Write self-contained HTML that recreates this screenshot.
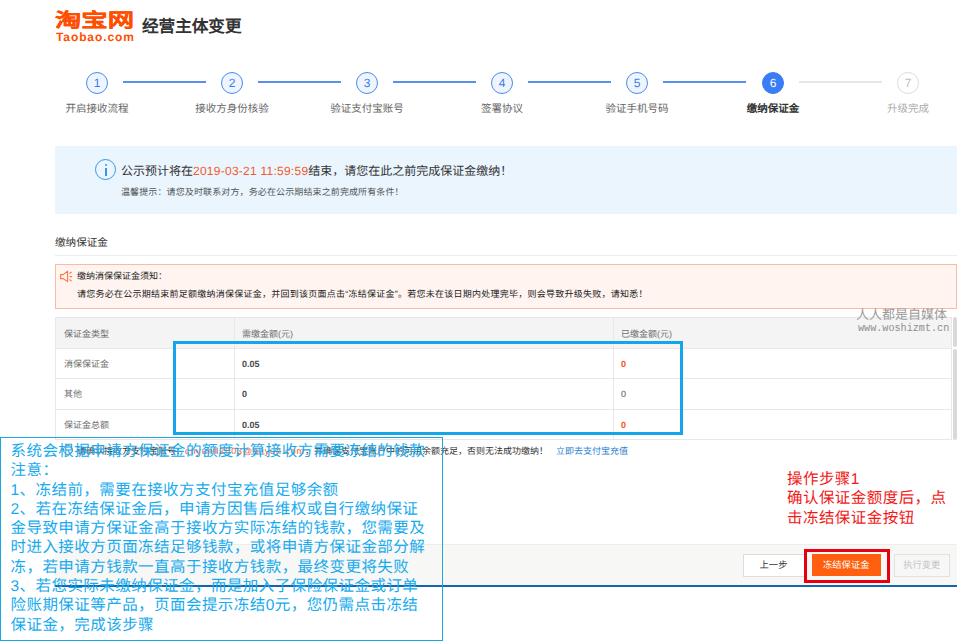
<!DOCTYPE html>
<html lang="zh-CN"><head><meta charset="utf-8">
<style>
*{margin:0;padding:0;box-sizing:border-box}
html,body{width:964px;height:643px;overflow:hidden;background:#fff;font-family:"Liberation Sans",sans-serif;color:#333;text-rendering:geometricPrecision}
.a{position:absolute;white-space:nowrap}
.logo1{left:55px;top:8px;font-size:19.5px;font-weight:900;color:#ff4e00;line-height:26px;transform-origin:0 0;transform:scaleX(1.35);-webkit-text-stroke:0.2px #ff4e00}
.logo2{left:56px;top:30px;font-size:12px;font-weight:bold;color:#ff4e00;line-height:14px;letter-spacing:0.9px}
.title{left:142px;top:15.5px;font-size:16.6px;font-weight:bold;color:#333;line-height:22px}
.circ{position:absolute;width:22px;height:22px;border:1px solid #4a8af0;border-radius:50%;background:#eef5ff;color:#3d7de8;font-size:12px;line-height:20px;text-align:center}
.circ.on{background:#3a7cf5;border-color:#3a7cf5;color:#fff}
.circ.off{background:#fff;border-color:#ddd;color:#bbb}
.line{position:absolute;height:2px;background:#5990f0;top:81px;width:83px}
.line.off{background:#e6e6e6}
.slab{position:absolute;top:101.5px;font-size:10.5px;color:#666;line-height:14px;width:120px;text-align:center}
.info{left:55px;top:146px;width:902px;height:68px;background:#eaf5fe}
.icon{left:95px;top:159px;width:21px;height:21px;border:1.7px solid #3496e8;border-radius:50%}
.icon:before{content:"";position:absolute;left:8.6px;top:4.2px;width:2px;height:2px;background:#3496e8;border-radius:1px}
.icon:after{content:"";position:absolute;left:8.8px;top:7.5px;width:1.8px;height:8px;background:#3496e8}
.t1{left:121px;top:163px;font-size:12px;color:#333;line-height:16px}
.t1 span{color:#f25a2a;letter-spacing:0.25px}
.t2{left:121px;top:186px;font-size:9px;color:#555;line-height:12px;letter-spacing:0.12px}
.h2{left:55px;top:236px;font-size:10.6px;color:#333;line-height:14px}
.hr{left:55px;top:255px;width:902px;height:1px;background:#ececec}
.notice{left:55px;top:264px;width:902px;height:45px;background:#fff4f0;border:1px solid #f9bba3}
.n1{left:77px;top:270px;font-size:9px;color:#222;line-height:12px}
.n2{left:77px;top:288px;font-size:9px;color:#222;line-height:12px;letter-spacing:0.25px}
.tbl{left:55px;top:317px;width:897px;height:123px;border:1px solid #e8e8e8}
.row{position:absolute;left:0;width:895px;height:1px;background:#e8e8e8}
.col{position:absolute;top:0;width:1px;height:121px;background:#e8e8e8}
.th{position:absolute;left:0;top:0;width:895px;height:30px;background:#f4f4f4}
.cell{position:absolute;font-size:9px;color:#6e6e6e;line-height:12px}
.num{position:absolute;font-size:9px;color:#4a4a4a;font-weight:bold;line-height:12px}
.org{color:#f5561f}
</style></head><body>
<div class="a logo1">淘宝网</div>
<div class="a logo2">Taobao.com</div>
<div class="a title">经营主体变更</div>

<div class="circ" style="left:86px;top:72px">1</div>
<div class="line" style="left:123px"></div>
<div class="circ" style="left:221px;top:72px">2</div>
<div class="line" style="left:258px"></div>
<div class="circ" style="left:356px;top:72px">3</div>
<div class="line" style="left:393px"></div>
<div class="circ" style="left:491px;top:72px">4</div>
<div class="line" style="left:528px"></div>
<div class="circ" style="left:626px;top:72px">5</div>
<div class="line" style="left:663px"></div>
<div class="circ on" style="left:762px;top:72px">6</div>
<div class="line off" style="left:799px"></div>
<div class="circ off" style="left:897px;top:72px">7</div>

<div class="slab" style="left:37px">开启接收流程</div>
<div class="slab" style="left:172px">接收方身份核验</div>
<div class="slab" style="left:307px">验证支付宝账号</div>
<div class="slab" style="left:442px">签署协议</div>
<div class="slab" style="left:577px">验证手机号码</div>
<div class="slab" style="left:713px;font-weight:bold;color:#333">缴纳保证金</div>
<div class="slab" style="left:848px;color:#aaa">升级完成</div>

<div class="a info"></div>
<div class="a icon"></div>
<div class="a t1">公示预计将在<span>2019-03-21 11:59:59</span>结束，请您在此之前完成保证金缴纳！</div>
<div class="a t2">温馨提示：请您及时联系对方，务必在公示期结束之前完成所有条件！</div>

<div class="a h2">缴纳保证金</div>
<div class="a hr"></div>

<div class="a notice"></div>
<div class="a n1">缴纳消保保证金须知：</div>
<div class="a n2">请您务必在公示期结束前足额缴纳消保保证金，并回到该页面点击“冻结保证金”。若您未在该日期内处理完毕，则会导致升级失败，请知悉！</div>

<div class="a tbl">
 <div class="th"></div>
 <div class="row" style="top:30px"></div>
 <div class="row" style="top:60px"></div>
 <div class="row" style="top:91px"></div>
 <div class="col" style="left:178px"></div>
 <div class="col" style="left:557px"></div>
 <div class="cell" style="left:8px;top:10px">保证金类型</div>
 <div class="cell" style="left:186px;top:10px">需缴金额(元)</div>
 <div class="cell" style="left:565px;top:10px">已缴金额(元)</div>
 <div class="cell" style="left:8px;top:40px">消保保证金</div>
 <div class="cell" style="left:8px;top:70px">其他</div>
 <div class="cell" style="left:8px;top:101px">保证金总额</div>
 <div class="num" style="left:186px;top:40px">0.05</div>
 <div class="num" style="left:186px;top:70px">0</div>
 <div class="num" style="left:186px;top:101px">0.05</div>
 <div class="num org" style="left:565px;top:40px">0</div>
 <div class="num" style="left:565px;top:70px;font-weight:normal;color:#555">0</div>
 <div class="num org" style="left:565px;top:101px">0</div>
</div>


<div class="a" style="left:63px;top:445px;width:10px;height:10px;border:1px solid #888;border-radius:50%"></div>
<div class="a note" style="left:77px;top:445px;font-size:9px;line-height:12px;color:#333">请确认接收方支付宝账号：<span class="org" style="letter-spacing:0.9px">cnyunll2003@aliyun.com</span>，并确保支付宝账户中的可用余额充足，否则无法成功缴纳！<span style="color:#2a7fd4;margin-left:8px">立即去支付宝充值</span></div>

<div class="a foot" style="left:55px;top:544px;width:902px;height:43px;background:#f6f6f6;border-bottom:2px solid #1265ae;border-top:1px solid #ededed;background:#f7f7f5"></div>
<div class="a btn" style="left:743px;top:554px;width:64px;height:23px;background:#fff;border:1px solid #ddd;font-size:9.3px;color:#333;line-height:21px;text-align:center;text-indent:-3px">上一步</div>
<div class="a btn" style="left:811.5px;top:554px;width:69.5px;height:22px;background:#ff5f0e;font-size:9.3px;color:#fff;line-height:22px;text-align:center">冻结保证金</div>
<div class="a btn" style="left:893.5px;top:554px;width:56.5px;height:23px;background:#f7f7f7;border:1px solid #e2e2e2;font-size:9.3px;color:#c4c4c4;line-height:21px;text-align:center">执行变更</div>


<svg class="a" style="left:58px;top:268px" width="16" height="16" viewBox="0 0 16 16"><path d="M2.6 6.6H5.2L9.6 3.2V13.6L5.2 10.6H2.6Z" fill="none" stroke="#ff7440" stroke-width="1.1" stroke-linejoin="round"/><path d="M11.8 5.2L13.2 4.2M12 8.6H13.6M11.8 11.8L13.2 12.8" stroke="#ff7440" stroke-width="1.1" stroke-linecap="round"/></svg>
<div class="a" style="left:952.5px;top:317px;width:4.5px;height:30px;background:#d9d9d9;border-radius:2px"></div>
<div class="a" style="left:952.5px;top:349px;width:4.5px;height:91px;background:#d9d9d9;border-radius:2px"></div>
<div class="a wm1" style="left:856px;top:306.5px;font-size:13px;color:#9a9a9a;line-height:16px">人人都是自媒体</div>
<div class="a wm2" style="left:857.5px;top:322.5px;font-family:'Liberation Mono',monospace;font-size:11.4px;color:#8f8f8f;line-height:12px;transform-origin:0 0;transform:scaleX(0.89)">www.woshizmt.cn</div>

<div class="a" style="left:173px;top:341px;width:510px;height:94px;border:3px solid #14a6e8"></div>
<div class="a" style="left:0px;top:437px;width:443px;height:204px;border:1.5px solid #1ba6e4"></div>
<div class="a ann" style="left:10.5px;top:442px;font-size:15.5px;letter-spacing:0.45px;line-height:19.28px;color:#17abee;white-space:pre">系统会根据申请方保证金的额度计算接收方需要冻结的钱款
注意：
1、冻结前，需要在接收方支付宝充值足够余额
2、若在冻结保证金后，申请方因售后维权或自行缴纳保证
金导致申请方保证金高于接收方实际冻结的钱款，您需要及
时进入接收方页面冻结足够钱款，或将申请方保证金部分解
冻，若申请方钱款一直高于接收方钱款，最终变更将失败
3、若您实际未缴纳保证金，而是加入了保险保证金或订单
险账期保证等产品，页面会提示冻结0元，您仍需点击冻结
保证金，完成该步骤</div>

<div class="a red" style="left:787px;top:469.5px;font-size:15.5px;letter-spacing:0.45px;line-height:19.5px;color:#f21818;white-space:pre">操作步骤1
确认保证金额度后，点
击冻结保证金按钮</div>
<div class="a" style="left:804px;top:549px;width:86px;height:34px;border:3px solid #e50012"></div>
</body></html>
